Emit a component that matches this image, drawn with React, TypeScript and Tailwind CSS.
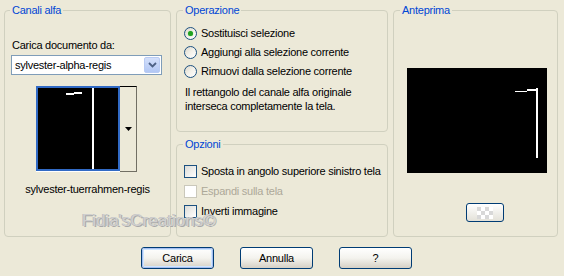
import React from "react";

const font = { fontFamily: "Tahoma, 'Liberation Sans', Arial, sans-serif" };

function Radio({ checked, label }: { checked?: boolean; label: string }) {
  return (
    <div className="flex h-[19px] items-center">
      <div className="flex h-[13px] w-[13px] items-center justify-center rounded-full border border-[#1c5180] bg-gradient-to-br from-[#dcd7cb] via-[#f3f1ea] to-white">
        {checked && <div className="h-[5px] w-[5px] rounded-full bg-[#21a121] shadow-[0_0_1px_#5dcf5d]" />}
      </div>
      <span className="ml-[4px] whitespace-nowrap leading-[13px]">{label}</span>
    </div>
  );
}

function Check({ label, disabled }: { label: string; disabled?: boolean }) {
  return (
    <div className="flex h-[20px] items-center">
      <div
        className={
          disabled
            ? "h-[13px] w-[13px] shrink-0 border border-[#cac8bb] bg-white"
            : "h-[13px] w-[13px] shrink-0 border border-[#1c5180] bg-gradient-to-br from-[#dcdcd7] to-white"
        }
      />
      <span
        className={
          disabled
            ? "ml-[4px] whitespace-nowrap leading-[13px] text-[#aca899]"
            : "ml-[4px] whitespace-nowrap leading-[13px]"
        }
      >
        {label}
      </span>
    </div>
  );
}

function XPButton({ label, def }: { label: string; def?: boolean }) {
  return (
    <div className="flex h-[22px] w-[73px] items-center justify-center rounded-[3px] border border-[#003c74] bg-gradient-to-b from-white via-[#f4f3ee] to-[#d6d0c5]">
      <div
        className={
          def
            ? "flex h-full w-full items-center justify-center rounded-[2px] border border-[#a6bdf0] shadow-[inset_0_0_0_1px_#cee7ff]"
            : "flex h-full w-full items-center justify-center"
        }
      >
        {label}
      </div>
    </div>
  );
}

export default function App() {
  return (
    <div
      className="relative h-[276px] w-[564px] overflow-hidden bg-[#ece9d8] text-[11px] tracking-[-0.25px] text-black"
      style={font}
    >
      <div className="flex gap-[5px] pl-[4px] pt-[4px]">
        {/* Canali alfa */}
        <fieldset className="h-[233px] w-[167px] rounded-[4px] border border-[#d0d0bf]">
          <legend className="ml-[5px] px-[2px] leading-[13px] text-[#0046d5]">Canali alfa</legend>
          <div className="ml-[7px] mt-[22px] leading-[13px]">Carica documento da:</div>
          <div className="ml-[6px] mt-[3px] flex h-[20px] w-[151px] items-center border border-[#7f9db9] bg-white pl-[3px]">
            <span className="flex-1 leading-[13px]">sylvester-alpha-regis</span>
            <div className="mr-[1px] flex h-[16px] w-[16px] items-center justify-center rounded-[2px] border border-[#b9cbf3] bg-gradient-to-b from-[#d4e0fb] to-[#b2c7f4]">
              <svg width="9" height="6" viewBox="0 0 9 6">
                <path d="M1 1 L4.5 4.5 L8 1" fill="none" stroke="#4d6185" strokeWidth="1.8" />
              </svg>
            </div>
          </div>
          <div className="ml-[31px] mt-[11px] flex">
            <div className="flex flex-col">
              <div className="relative h-[85px] w-[84px] border-2 border-[#316ac5] bg-black">
                <div className="absolute left-[54px] top-[0px] h-[81px] w-[2px] bg-white" />
                <div className="absolute left-[28px] top-[5px] h-[2px] w-[8px] bg-white" />
                <div className="absolute left-[36px] top-[4px] h-[2px] w-[8px] bg-white" />
              </div>
              <div className="h-[1px] w-[84px] bg-white" />
            </div>
            <div className="flex h-[86px] w-[17px] items-center justify-center border-r border-b border-t border-t-black border-r-[#716f64] border-b-[#716f64] bg-[#ece9d8]">
              <svg width="7" height="4" viewBox="0 0 7 4">
                <path d="M0 0 H7 L3.5 4 Z" fill="black" />
              </svg>
            </div>
          </div>
          <div className="mt-[11px] text-center leading-[13px]">sylvester-tuerrahmen-regis</div>
        </fieldset>

        {/* Middle column */}
        <div className="flex w-[212px] flex-col">
          <fieldset className="h-[128px] rounded-[4px] border border-[#d0d0bf]">
            <legend className="ml-[6px] px-[2px] leading-[13px] text-[#0046d5]">Operazione</legend>
            <div className="ml-[7px] mt-[7px] flex flex-col">
              <Radio checked label="Sostituisci selezione" />
              <Radio label="Aggiungi alla selezione corrente" />
              <Radio label="Rimuovi dalla selezione corrente" />
            </div>
            <div className="ml-[8px] mt-[4px] leading-[14px]">
              Il rettangolo del canale alfa originale
              <br />
              interseca completamente la tela.
            </div>
          </fieldset>
          <fieldset className="mt-[6px] h-[99px] rounded-[4px] border border-[#d0d0bf]">
            <legend className="ml-[6px] px-[2px] leading-[13px] text-[#0046d5]">Opzioni</legend>
            <div className="ml-[7px] mt-[10px] flex flex-col">
              <Check label="Sposta in angolo superiore sinistro tela" />
              <Check disabled label="Espandi sulla tela" />
              <Check label="Inverti immagine" />
            </div>
          </fieldset>
        </div>

        {/* Anteprima */}
        <fieldset className="h-[233px] w-[165px] rounded-[4px] border border-[#d0d0bf]">
          <legend className="ml-[6px] px-[2px] leading-[13px] text-[#0046d5]">Anteprima</legend>
          <div className="relative ml-[13px] mt-[51px] h-[105px] w-[140px] bg-black">
            <div className="absolute left-[129px] top-[20px] h-[70px] w-[2px] bg-white" />
            <div className="absolute left-[108px] top-[23px] h-[1px] w-[12px] bg-white" />
            <div className="absolute left-[120px] top-[21px] h-[2px] w-[10px] bg-white" />
          </div>
          <div className="ml-[72px] mt-[30px] flex h-[19px] w-[38px] items-center justify-center rounded-[3px] border border-[#003c74] bg-gradient-to-b from-white to-[#e3e1d8]">
            <div className="grid grid-cols-4">
              {Array.from({ length: 12 }).map((_, i) => {
                const r = Math.floor(i / 4);
                const c = i % 4;
                return (
                  <div
                    key={i}
                    className={(r + c) % 2 === 0 ? "h-[4px] w-[4px] bg-[#d8d8d8]" : "h-[4px] w-[4px] bg-white"}
                  />
                );
              })}
            </div>
          </div>
        </fieldset>
      </div>

      {/* Buttons */}
      <div className="mt-[10px] flex gap-[26px] pl-[141px]">
        <XPButton label="Carica" def />
        <XPButton label="Annulla" />
        <XPButton label="?" />
      </div>

      {/* Watermark */}
      <div
        className="absolute left-[82px] top-[211px] text-[17px] leading-[20px] tracking-normal text-[#cfcfcf]"
        style={{ fontFamily: "'Liberation Sans', Arial, sans-serif", textShadow: "1px 1px 0 #a8a8a8, -1px 0 0 #bdbdbd" }}
      >
        Fidia'sCreations©
      </div>
    </div>
  );
}
